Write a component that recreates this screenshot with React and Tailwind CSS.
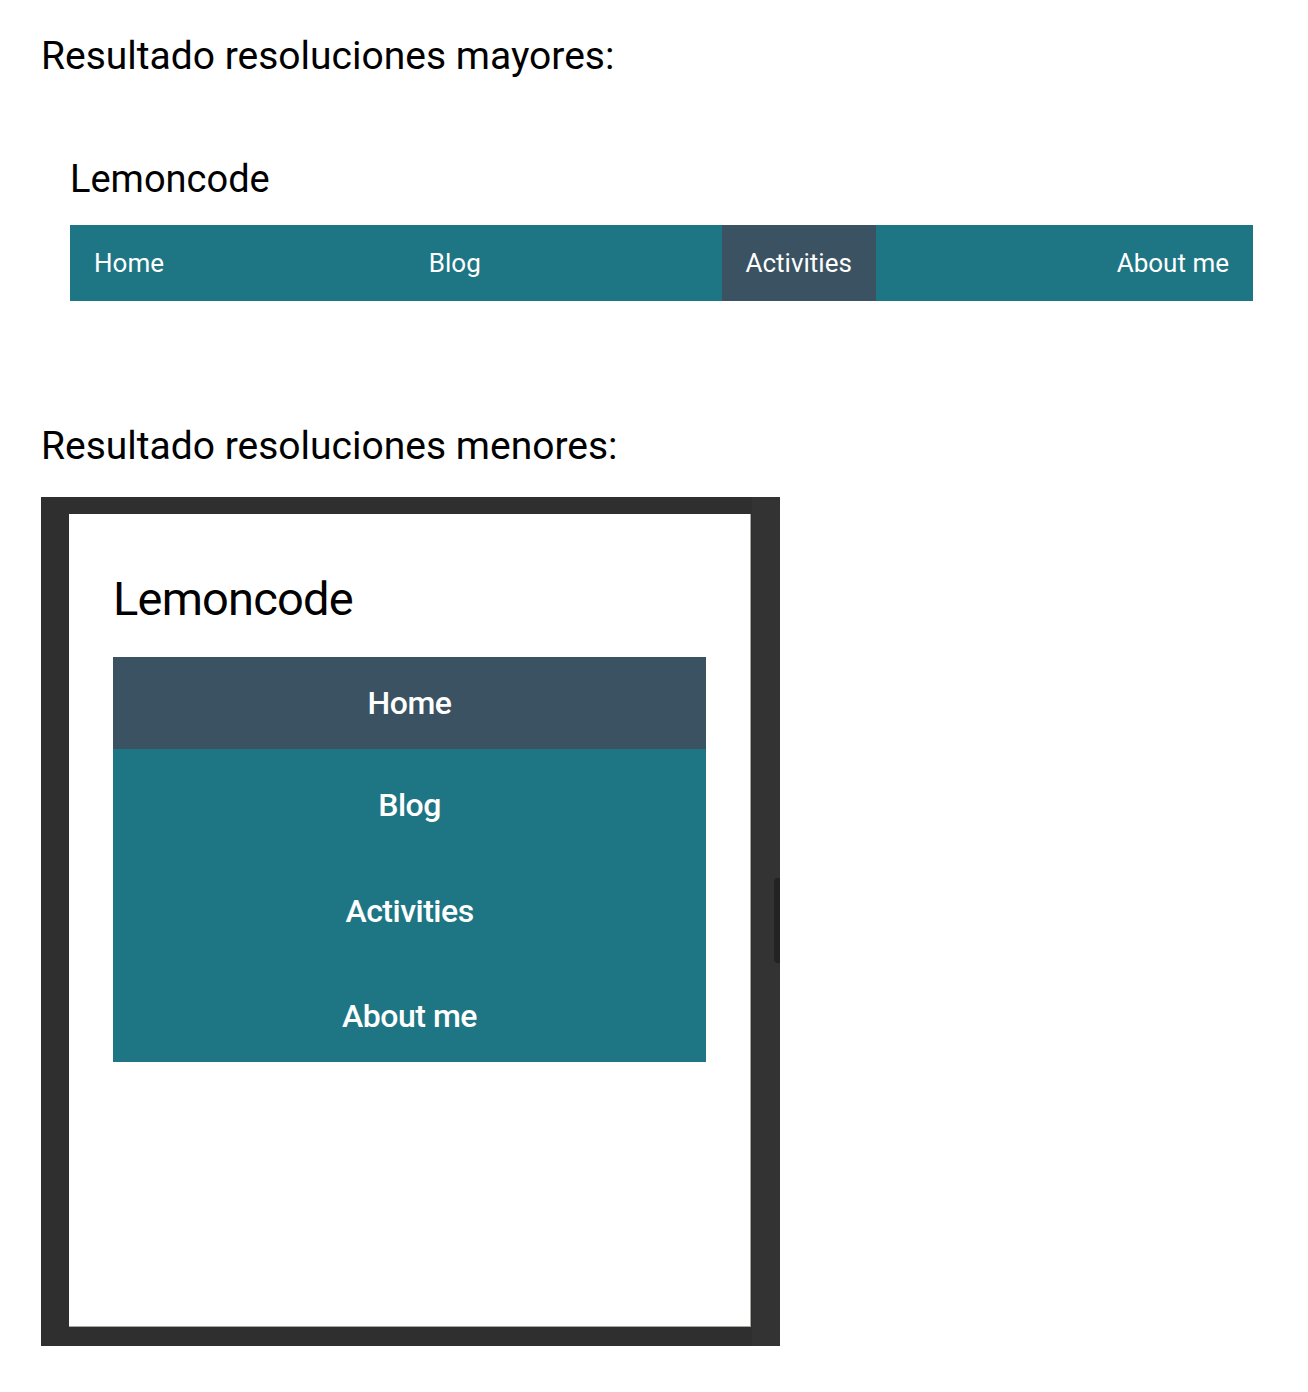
export default function App() {
  const font = { fontFamily: 'Roboto, "Liberation Sans", sans-serif' };
  return (
    <div className="min-h-[1392px] bg-white text-black" style={font}>
      <div className="pl-[41px] pt-[37px]">
        <h1 className="text-[39px] leading-[39px] font-normal">Resultado resoluciones mayores:</h1>

        <div className="ml-[29px] mr-[55px] mt-[84px]">
          <div className="text-[38px] leading-[38px] font-normal">Lemoncode</div>
          <nav className="mt-[27px] flex h-[76px] items-stretch justify-between bg-[#1e7684] text-[26px] text-white">
            <a className="flex items-center px-[24px]">Home</a>
            <a className="flex items-center px-[24px]">Blog</a>
            <a className="flex items-center bg-[#3a5261] px-[24px]">Activities</a>
            <a className="flex items-center px-[24px]">About me</a>
          </nav>
        </div>

        <h2 className="mt-[126px] text-[39px] leading-[39px] font-normal">Resultado resoluciones menores:</h2>

        <div className="mt-[31px] flex h-[849px] w-[739px] bg-[#2f2f2f]">
          <div className="ml-[28px] mt-[17px] flex h-[813px] w-[682px] flex-col border-r border-b border-[#a8a8a0] bg-white px-[44px] pt-[61px]">
            <div className="text-[47px] leading-[48px] font-normal tracking-[-0.8px]">Lemoncode</div>
            <div className="mt-[34px] flex flex-col bg-[#1e7684] text-[32px] font-medium tracking-[-0.5px] text-white">
              <div className="flex h-[92px] items-center justify-center bg-[#3a5261]">Home</div>
              <div className="flex h-[109px] items-center justify-center pt-[3px]">Blog</div>
              <div className="flex h-[106px] items-center justify-center">Activities</div>
              <div className="flex h-[98px] items-center justify-center pt-[6px]">About me</div>
            </div>
          </div>
          <div className="relative ml-px mt-0 h-full flex-1 bg-[#333333]">
            <div className="absolute right-0 top-[381px] h-[85px] w-[6px] rounded-l-sm bg-[#232323]" />
          </div>
        </div>
      </div>
    </div>
  );
}
